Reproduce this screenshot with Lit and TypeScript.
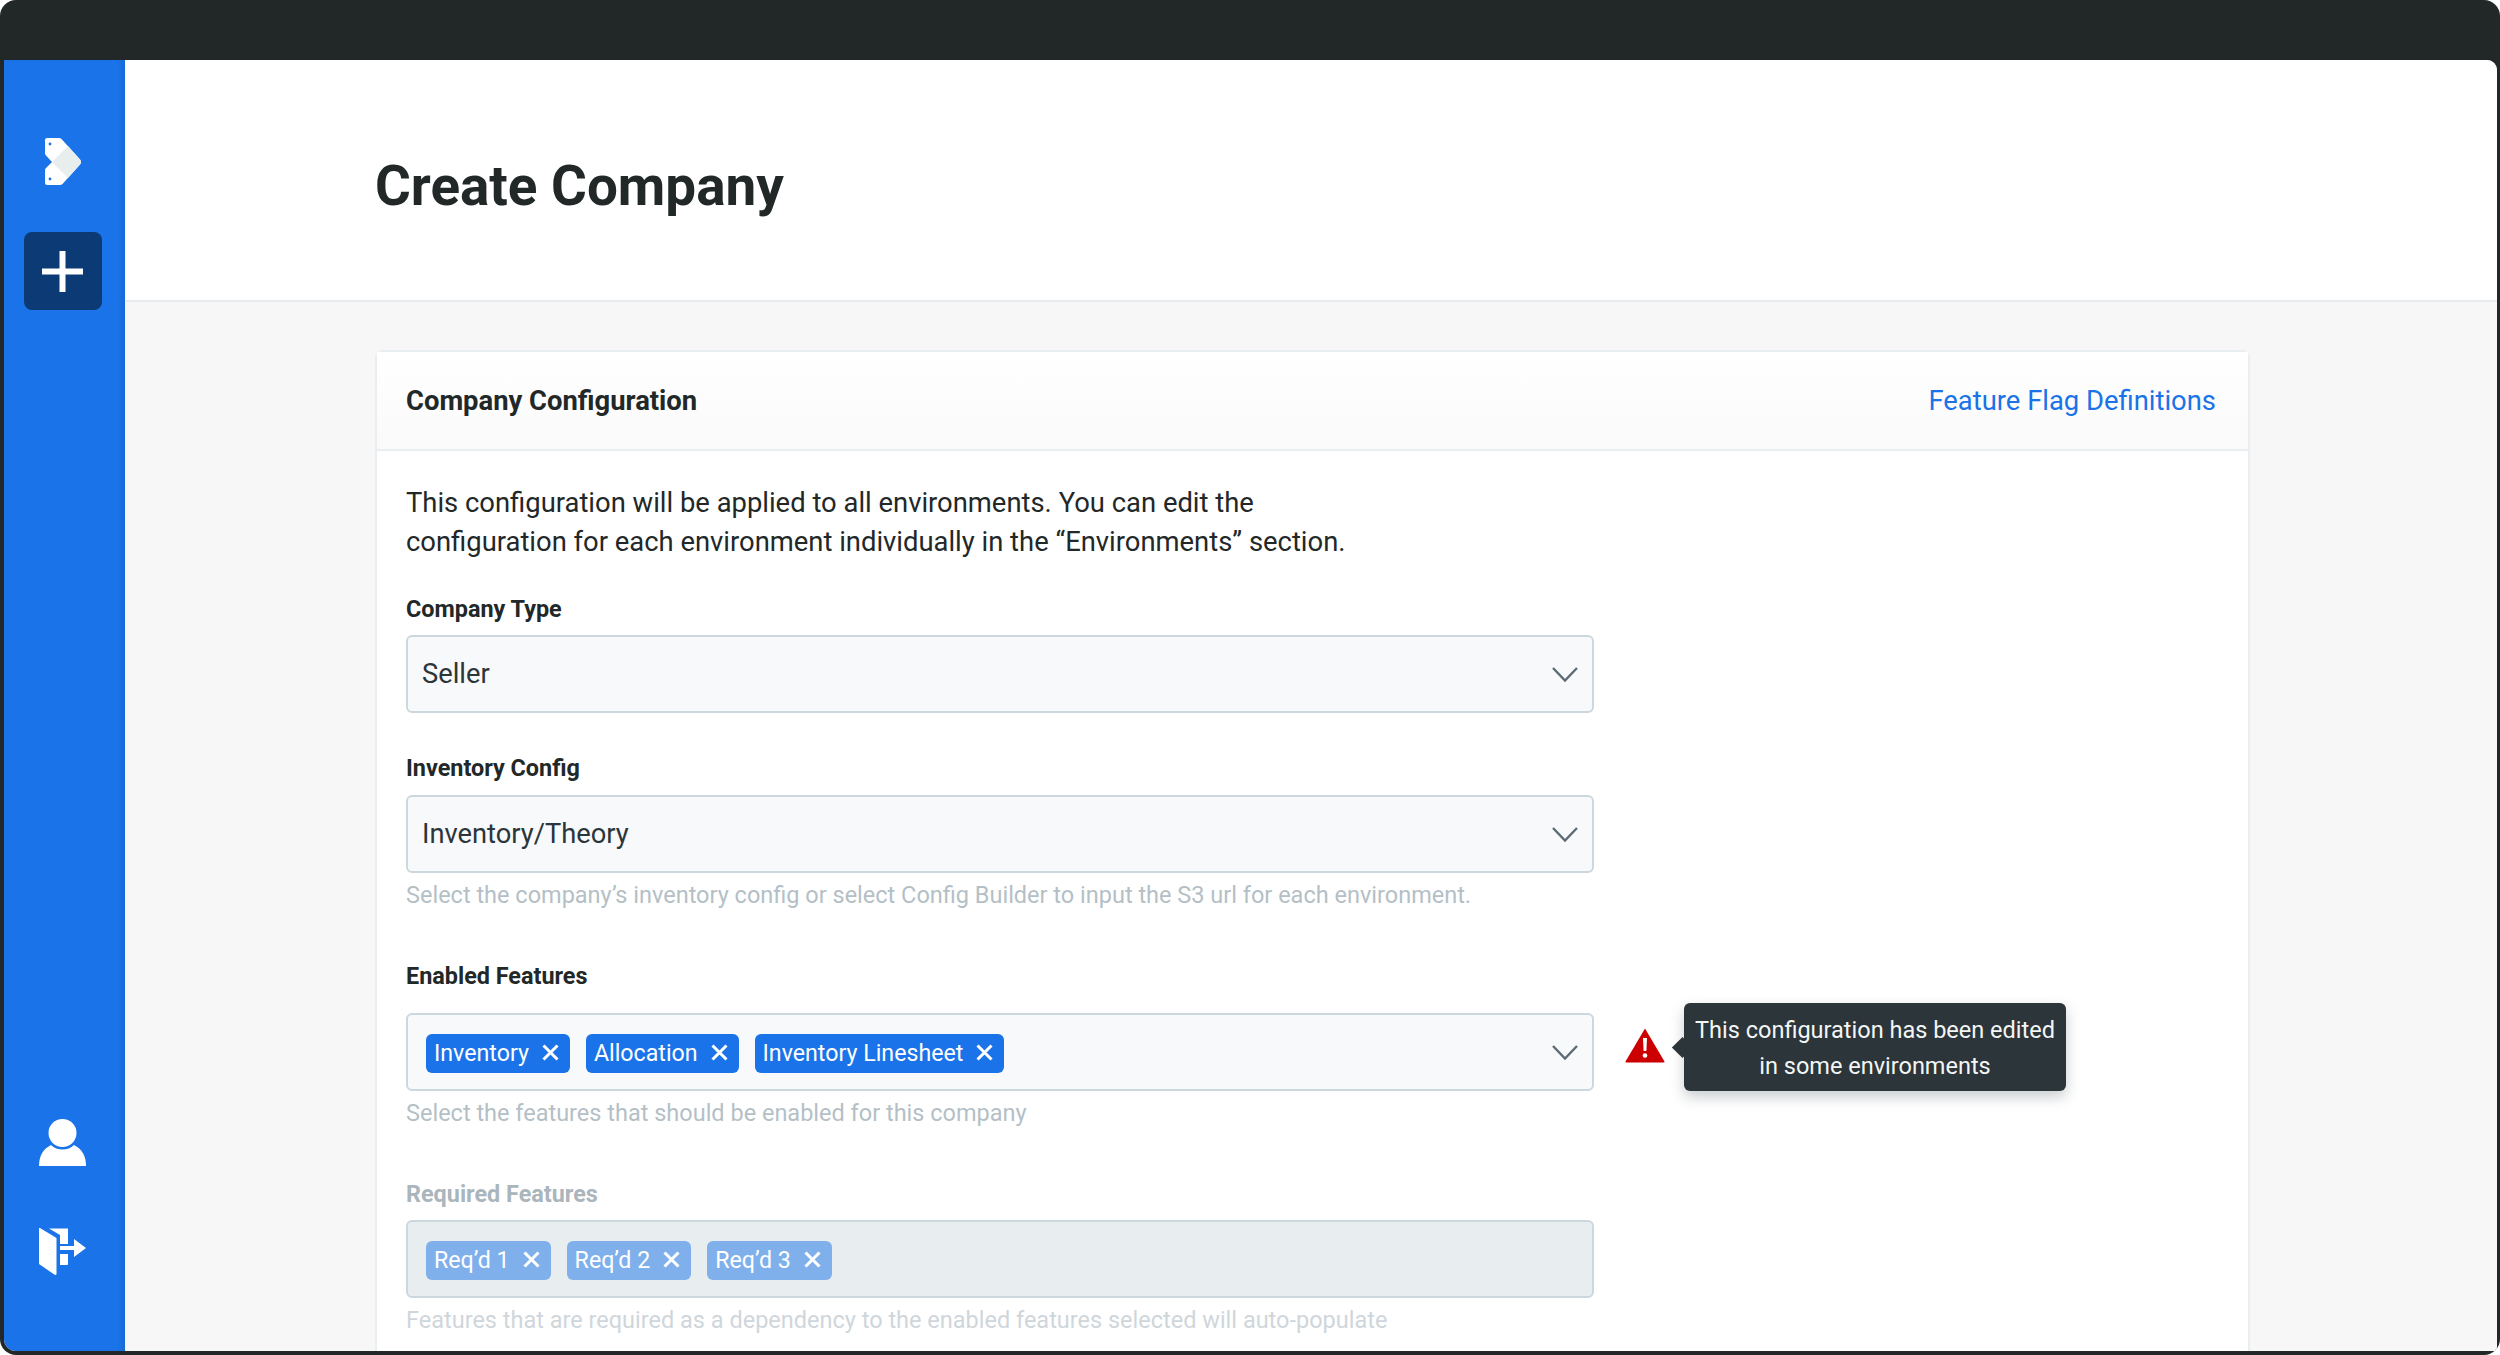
import { LitElement, html, css, svg } from 'lit';
import { customElement } from 'lit/decorators.js';

const chevron = html`<svg class="chevron" viewBox="0 0 26 15" width="26" height="15">
  <path d="M1 1 L13 13.500 L25 1" fill="none" stroke="#5b6b73" stroke-width="2.4" />
</svg>`;

const closeIcon = html`<svg class="close" viewBox="0 0 17 17" width="17" height="17">
  <path d="M1.500 1.500 L15.500 15.500 M15.500 1.500 L1.500 15.500" fill="none" stroke="#fff" stroke-width="3" />
</svg>`;

const logo = svg`<svg class="logo" viewBox="0 0 36 48" width="36" height="48">
  <path d="M2 0 H14 Q15.500 0 16.500 1 L35 21.500 Q37 24 35 26.500 L17.500 46 Q16.500 47 15 47 H2 Q0 47 0 45 V32 Q0 31 1 30 L7 24 L1 17.500 Q0 16.500 0 15 V2 Q0 0 2 0 Z" fill="#fff" />
  <path d="M7 24 L23 8 L35 21.500 Q37 24 35 26.500 L23 40 Z" fill="#e8eded" />
  <circle cx="5" cy="6" r="1.400" fill="#1a73e8" />
  <circle cx="5" cy="41" r="1.400" fill="#1a73e8" />
</svg>`;

const userIcon = svg`<svg viewBox="0 0 47 47" width="47" height="47">
  <circle cx="23.500" cy="14" r="14" fill="#fff" />
  <path d="M0 47 C0 37 4 30 12 26 C18 32 29 32 35 26 C43 30 47 37 47 47 Z" fill="#fff" />
</svg>`;

const doorIcon = svg`<svg viewBox="0 0 47 47" width="47" height="47" fill="#fff">
  <path d="M0 0 H1 L17.500 10 V46 Q17.500 47 16 47 L0 36 Z" />
  <path d="M10 0.500 H29 V16 H21 V7 Z" />
  <path d="M21 26 H29 V36 Q29 37 28 37 H21 Z" />
  <path d="M21 18 H35 V11 L47 20 L35 29 V22 H21 Z" />
</svg>`;

const warning = svg`<svg class="warning" viewBox="0 0 40 35" width="40" height="35">
  <path d="M20 0.500 L39.500 33.500 Q39.800 34.500 38.500 34.500 H1.500 Q0.200 34.500 0.500 33.500 Z" fill="#cc0000" />
  <path d="M18 10 H22 L21.400 23 H18.600 Z" fill="#fff" />
  <circle cx="20" cy="27.500" r="2.300" fill="#fff" />
</svg>`;

@customElement('app-root')
export class AppRoot extends LitElement {
  static styles = css`
    :host {
      display: block;
      height: 1355px;
      background: #fff;
      font-family: Roboto, 'Liberation Sans', sans-serif;
      color: #222828;
    }

    .frame {
      height: 1355px;
      box-sizing: border-box;
      padding: 60px 3px 4px 4px;
      background: #222828;
      border-radius: 16px;
      overflow: hidden;
    }

    .window {
      display: flex;
      height: 100%;
      border-radius: 0 10px 0 12px;
      overflow: hidden;
      background: #f7f7f8;
    }

    .sidebar {
      flex: none;
      box-sizing: border-box;
      width: 121px;
      padding: 78px 4px 76px 0;
      display: flex;
      flex-direction: column;
      align-items: center;
      background: #1a73e8;
      box-shadow: inset -6px 0 6px -4px rgba(20, 50, 100, 0.18);
    }

    .logo {
      display: block;
    }

    .add {
      width: 78px;
      height: 78px;
      margin-top: 46px;
      display: flex;
      align-items: center;
      justify-content: center;
      border-radius: 8px;
      background: #0b3a75;
    }

    .spacer {
      flex: 1;
    }

    .side-icon {
      display: block;
      height: 47px;
    }

    .side-icon + .side-icon {
      margin-top: 62px;
    }

    .main {
      flex: 1;
      min-width: 0;
      overflow: hidden;
    }

    .page-header {
      box-sizing: border-box;
      height: 242px;
      padding: 12px 0 0 250px;
      display: flex;
      align-items: center;
      background: #fff;
      border-bottom: 2px solid #e9ecee;
    }

    h1 {
      margin: 0;
      font-size: 54.8px;
      font-weight: 700;
    }

    .content {
      padding: 48px 247px 0 250px;
    }

    .card {
      background: #fff;
      border: 2px solid #e9eef1;
      border-radius: 8px 8px 0 0;
    }

    .card-head {
      box-sizing: border-box;
      height: 99px;
      padding: 0 32px 0 29px;
      display: flex;
      align-items: center;
      justify-content: space-between;
      background: linear-gradient(#fff, #fafafa);
      border-bottom: 2px solid #e9eef1;
    }

    .card-title {
      font-size: 27.4px;
      font-weight: 700;
    }

    .card-link {
      font-size: 27.4px;
      color: #1a73e8;
    }

    .card-body {
      padding: 33px 29px 80px;
    }

    .intro {
      margin: 0;
      font-size: 27.4px;
      line-height: 39px;
    }

    .field {
      margin-top: 31px;
    }

    .field.after-select {
      margin-top: 39px;
    }

    .field.after-hint {
      margin-top: 49px;
    }

    .label {
      font-size: 23.4px;
      font-weight: 700;
      line-height: 32px;
      margin-bottom: 10px;
    }

    .field.after-select .label {
      margin-bottom: 11px;
    }

    .field.roomy .label {
      margin-bottom: 21px;
    }

    .field.disabled .label {
      color: #aab5bc;
    }

    .row {
      position: relative;
      display: flex;
      align-items: flex-start;
      gap: 31px;
    }

    .select {
      box-sizing: border-box;
      flex: none;
      width: 1188px;
      height: 78px;
      padding: 0 14px 0 14px;
      display: flex;
      align-items: center;
      justify-content: space-between;
      font-size: 27.3px;
      color: #2c3539;
      background: #f8f9fa;
      border: 2px solid #cdd8de;
      border-radius: 6px;
    }

    .field.disabled .select {
      background: #e8edf0;
    }

    .tags {
      display: flex;
      gap: 16px;
      margin-top: 3px;
      padding-left: 4px;
    }

    .tag {
      box-sizing: border-box;
      height: 39px;
      padding: 0 11px 2px 8px;
      display: flex;
      align-items: center;
      gap: 13px;
      font-size: 23.2px;
      color: #fff;
      background: #1a73e8;
      border-radius: 6px;
    }

    .field.disabled .tag {
      background: #80b0ec;
    }

    .close,
    .chevron {
      display: block;
      flex: none;
    }

    .hint {
      margin-top: 6px;
      font-size: 23.5px;
      line-height: 32px;
      color: #b4bfc6;
    }

    .field.disabled .hint {
      color: #cfd6db;
    }

    .warning {
      display: block;
      flex: none;
      margin-top: 15px;
    }

    .tooltip {
      position: absolute;
      left: 1278px;
      top: -10px;
      box-sizing: border-box;
      width: 382px;
      height: 88px;
      padding: 9px 0;
      font-size: 23.5px;
      line-height: 36px;
      text-align: center;
      color: #f4f6f6;
      background: #2c3539;
      border-radius: 6px;
      box-shadow: 0 6px 14px rgba(40, 55, 65, 0.25);
    }

    .tooltip::before {
      content: '';
      position: absolute;
      left: -9px;
      top: 37px;
      width: 15px;
      height: 15px;
      background: #2c3539;
      transform: rotate(45deg);
    }
  `;

  renderTags(tags: string[]) {
    return html`<div class="tags">
      ${tags.map(tag => html`<div class="tag"><span>${tag}</span>${closeIcon}</div>`)}
    </div>`;
  }

  render() {
    return html`
      <div class="frame">
        <div class="window">
          <nav class="sidebar">
            ${logo}
            <div class="add">
              <svg viewBox="0 0 41 41" width="41" height="41">
                <path d="M20.500 0 V41 M0 20.500 H41" stroke="#fff" stroke-width="6" fill="none" />
              </svg>
            </div>
            <div class="spacer"></div>
            <div class="side-icon">${userIcon}</div>
            <div class="side-icon">${doorIcon}</div>
          </nav>
          <main class="main">
            <header class="page-header"><h1>Create Company</h1></header>
            <div class="content">
              <section class="card">
                <div class="card-head">
                  <div class="card-title">Company Configuration</div>
                  <div class="card-link">Feature Flag Definitions</div>
                </div>
                <div class="card-body">
                  <p class="intro">
                    This configuration will be applied to all environments. You can edit the<br />
                    configuration for each environment individually in the “Environments” section.
                  </p>

                  <div class="field">
                    <div class="label">Company Type</div>
                    <div class="select"><span>Seller</span>${chevron}</div>
                  </div>

                  <div class="field after-select">
                    <div class="label">Inventory Config</div>
                    <div class="select"><span>Inventory/Theory</span>${chevron}</div>
                    <div class="hint">
                      Select the company’s inventory config or select Config Builder to input the S3 url for each environment.
                    </div>
                  </div>

                  <div class="field after-hint roomy">
                    <div class="label">Enabled Features</div>
                    <div class="row">
                      <div class="select">
                        ${this.renderTags(['Inventory', 'Allocation', 'Inventory Linesheet'])}${chevron}
                      </div>
                      ${warning}
                      <div class="tooltip">This configuration has been edited<br />in some environments</div>
                    </div>
                    <div class="hint">Select the features that should be enabled for this company</div>
                  </div>

                  <div class="field after-hint disabled">
                    <div class="label">Required Features</div>
                    <div class="select">${this.renderTags(['Req’d 1', 'Req’d 2', 'Req’d 3'])}</div>
                    <div class="hint">
                      Features that are required as a dependency to the enabled features selected will auto-populate
                    </div>
                  </div>
                </div>
              </section>
            </div>
          </main>
        </div>
      </div>
    `;
  }
}
